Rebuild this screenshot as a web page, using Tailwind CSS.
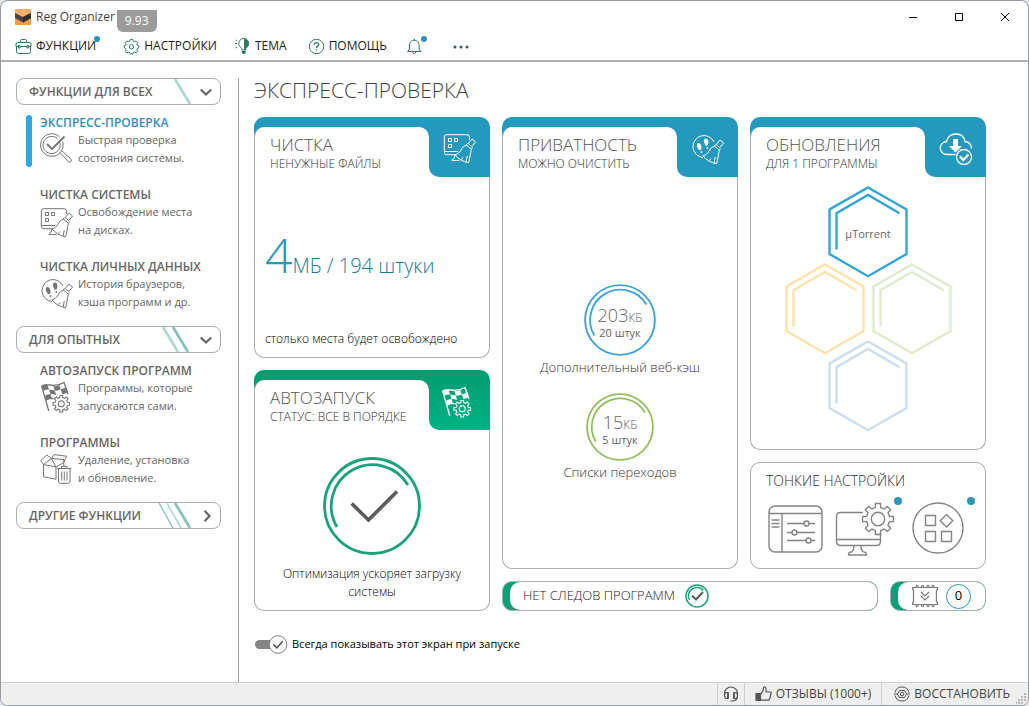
<!DOCTYPE html>
<html lang="ru">
<head>
  <title>Reg Organizer</title>
  <meta charset="UTF-8">
  <meta name="viewport" content="width=device-width, initial-scale=1">
  <script src="https://cdn.jsdelivr.net/npm/@tailwindcss/browser@4"></script>
</head>
<body class="bg-[#dfe3e7] font-['Open_Sans',sans-serif] text-xs text-[#666]">

<!-- icons -->
<svg class="hidden">
  <symbol id="gear" viewBox="-11 -11 22 22">
    <path d="M-1.7-7.3L-1.6-9.9L1.6-9.9L1.7-7.3L4-6.4L5.9-8.1L8.1-5.9L6.4-4L7.3-1.7L9.9-1.6L9.9 1.6L7.3 1.7L6.4 4L8.1 5.9L5.9 8.1L4 6.4L1.7 7.3L1.6 9.9L-1.6 9.9L-1.7 7.3L-4 6.4L-5.9 8.1L-8.1 5.9L-6.4 4L-7.3 1.7L-9.9 1.6L-9.9-1.6L-7.3-1.7L-6.4-4L-8.1-5.9L-5.9-8.1L-4-6.4Z"/>
    <circle r="3.6"/>
  </symbol>
  <symbol id="broom" viewBox="0 0 34 32">
    <path d="M29 6l3.6 3-3.8 4.6-3.6-3zM24.6 10.2l-1.3 1.7 5 4.3 1.4-1.7M23.5 12.5c-3 .4-4 1.600-5.500 4.500-1.500 2.800-3.400 4.300-6 4.800 3 4 8 7 13.500 8 1.600-4.600 1.600-9 2.900-13.500M24.300 23l-1.200 6M20 24.500l-1.500 2"/>
  </symbol>
  <symbol id="monitor-broom" viewBox="0 0 34 32">
    <path d="M26.500 7V4.200q0-2.500-2.500-2.500H3.800q-2.500 0-2.500 2.500v15q0 2.500 2.500 2.500H12M1.300 18.500h14M12 22l-1 3.500q-2 .4-2 2h7.500M5.500 5.500h3v3h-3zM11.500 5.500h3v3h-3zM5.500 11.500h3v3h-3z"/>
    <use href="#broom" width="34" height="32"/>
  </symbol>
  <symbol id="steps-broom" viewBox="0 0 34 32">
    <path d="M23 9A11 11 0 1 0 12 24.500"/>
    <path d="M13.500 6q2.300-1.600 3.600 1 .8 2.600-.5 5.500l-1.900.3q-2.600-4-1.200-6.800zM15.300 14.300l1.700-.3.300 1.600-1.500.4zM6.200 10.500q2.300-1.200 3.700 1.200 1 2.300.4 5l-2 .6q-3.500-3.500-2.100-6.800zM9.300 18.600l1.700-.5.5 1.500-1.400.6z" fill="currentColor" stroke="none"/>
    <use href="#broom" y="1" width="34" height="32"/>
  </symbol>
  <symbol id="flag-gear" viewBox="0 0 34 32">
    <path d="M1.500 4.500L8.800 30M1.500 5C8 1 13 8 24 1.500L28 13M5.500 19.500q4-3 8-1.700" stroke-width="1.300"/>
    <path d="M2 5q2.800-1.800 5.500-1.300l1.500 4.800q-2.800-.3-5.500 1.300zM13.300 5q4 .6 6-1l1.500 4.600q-3 1.400-6.100.9zM9 8.500q3 .5 5.700 1l1.500 4.400q-3-.7-5.700-.9zM20.800 8.600q3-1 5.300-2.600l1.700 5q-3 2-5.500 2.300zM5 14.800q2.500-1.600 5.500-1.800l1.500 4.700q-3-.2-5.500 1.400z" fill="currentColor" stroke="none"/>
    <use href="#gear" x="12" y="13.500" width="18.500" height="18.500" stroke-width="1.300"/>
  </symbol>
  <symbol id="magnifier" viewBox="0 0 34 32">
    <path d="M19.600 4.800A11.300 11.300 0 1 0 22.600 9.500M17.600 6.800A8.600 8.600 0 1 0 20 11M20 20.600l8.500 9.200q1.600.8 2.600-.6.600-1.300-.3-2.400L22 19"/>
    <path d="M7 12l5 5L24.500 4.500" stroke-width="1.800"/>
  </symbol>
  <symbol id="box-trash" viewBox="0 0 34 32">
    <path d="M3.500 11.500v12.300l12.500 2.400V14zM3.500 11.500L.7 7.600 6.800 2l4.700 3.500M11.500 5.500L3.500 11.500M11.500 5.500l12.300 1V10M16 14L11.500 5.500 14 1.600l12.500 1.600-3 6.500-7.500 4.300M23.800 10v3"/>
    <path d="M17 15.500h14.500M21.500 15.300v-2h5.500v2M18.500 16v12q0 2.300 2 2.300h7.500q2 0 2-2.300V16M21.700 18.500v9M24.300 18.500v9M27 18.500v9"/>
  </symbol>
  <symbol id="hexagon" viewBox="0 0 80 92">
    <path d="M40 1.500L78.500 23.500V68L40 90.200 1.500 68V23.500zM71.500 27.200L40 9 8.500 27.200V63.500"/>
  </symbol>
  <symbol id="ring" viewBox="0 0 98 98">
    <circle cx="49" cy="49" r="47.500"/>
    <path d="M14 70A41 41 0 0 1 85 28"/>
  </symbol>
</svg>

<div class="flex min-h-screen flex-col overflow-hidden rounded-lg border border-[#929ca4] bg-white">

  <!-- title bar -->
  <header>
    <div class="flex h-[31px] items-center pl-3.5">
      <svg class="mr-[5px] size-4" viewBox="0 0 16 16">
        <rect width="16" height="16" rx="1" fill="#f39a4a"/>
        <path d="M0 0h16v5L8 9 0 5z" fill="#f8b06c"/>
        <path d="M0 4l8 4 8-4v5l-8 4.500L0 9z" fill="#4b4340"/>
        <path d="M8 8l8-4v5l-8 4.500z" fill="#332e2d"/>
      </svg>
      <span class="text-[#444]">Reg Organizer</span>
      <span class="ml-0.5 flex h-[22px] items-center self-end rounded-b-md bg-[#9b9b9b] px-2 text-white">9.93</span>
      <div class="ml-auto flex text-black">
        <button class="flex h-7 w-[46px] items-center justify-center" aria-label="Свернуть"><svg class="size-3" viewBox="0 0 12 12" stroke="currentColor"><path d="M2 6.500h8"/></svg></button>
        <button class="flex h-7 w-[46px] items-center justify-center" aria-label="Развернуть"><svg class="size-3" viewBox="0 0 12 12" stroke="currentColor" fill="none"><path d="M2.500 2.500h7v7h-7z"/></svg></button>
        <button class="flex h-7 w-[46px] items-center justify-center" aria-label="Закрыть"><svg class="size-3" viewBox="0 0 12 12" stroke="currentColor"><path d="M2 2l8 8M10 2l-8 8"/></svg></button>
      </div>
    </div>

    <!-- menu -->
    <nav class="flex h-[30px] items-center border-b-2 border-[#b2b2b2] pl-3.5 text-[#1c1c1c]">
      <button class="relative mr-[27px] flex items-center gap-1">
        <svg class="size-[17px] text-[#2b7d5c]" viewBox="0 0 17 17" fill="none" stroke="currentColor">
          <path d="M1.500 8.500v5q0 2 2 2h10q2 0 2-2v-5M2.500 4.500h12q1.500 0 1.500 1.500v2.500H13.500M5 8.500h7M3.500 8.500H1V6q0-1.500 1.500-1.500M5.500 4.500V2.500q0-1 1-1h4q1 0 1 1v2M3.500 7.500h1.500v2.500h-1.500zM12 7.500h1.500v2.500H12z"/>
        </svg>
        ФУНКЦИИ
        <span class="absolute -right-1 -top-0.5 size-1.5 rounded-full bg-[#2e93b8]"></span>
      </button>
      <button class="mr-[17px] flex items-center gap-1">
        <svg class="size-[17px] text-[#2b7d5c]" viewBox="0 0 17 17" fill="none" stroke="currentColor">
          <path d="M7.300 1.500h2.400l.5 1.600 1.400.6 1.500-.8 1.500 1.500-.8 1.500.6 1.400 1.400.5v2.100l-1.400.5-.6 1.400.8 1.500-1.500 1.500-1.500-.8-1.400.6-.5 1.400H7.300l-.5-1.400-1.400-.6-1.500.8-1.500-1.500.8-1.500-.6-1.400L1.200 9.900V7.800l1.400-.5.600-1.400-.8-1.500 1.500-1.500 1.500.8 1.400-.6z"/><circle cx="8.500" cy="8.800" r="2.200"/>
        </svg>
        НАСТРОЙКИ
      </button>
      <button class="mr-[21px] flex items-center gap-1">
        <svg class="size-[17px] text-[#2b7d5c]" viewBox="0 0 17 17" fill="none" stroke="currentColor">
          <path d="M8 12q0-1.700-1.300-2.600A5 5 0 1 1 12.800 9.400Q11.500 10.300 11.500 12z"/>
          <path d="M10 .9a4.500 4.500 0 0 1 3 8Q11.500 10.300 11.500 12H10zM7.700 13h4v1.500q-.5 1.500-2 1.500t-2-1.500z" fill="currentColor" stroke="none"/>
          <path d="M1 5.500h2M1.500 2l1.500 1M1.500 10l1.500-1"/>
        </svg>
        ТЕМА
      </button>
      <button class="mr-[19px] flex items-center gap-1">
        <svg class="size-[17px] text-[#2b7d5c]" viewBox="0 0 17 17" fill="none" stroke="currentColor">
          <circle cx="8.500" cy="8.500" r="7.200"/><path d="M6.300 6.800q.1-2.200 2.200-2.200t2.200 1.900c0 1.700-2.200 1.600-2.200 3.500M8.500 11.200v1.400" stroke-width="1.300"/>
        </svg>
        ПОМОЩЬ
      </button>
      <button class="relative mr-[30px] flex items-center" aria-label="Уведомления">
        <svg class="size-[17px] text-[#2b7d5c]" viewBox="0 0 17 17" fill="none" stroke="currentColor">
          <path d="M1.500 13.500q2-1.300 2-3.500V7a4.800 4.800 0 0 1 9.600 0v3q0 2.200 2 3.500zM8.300 2.300V.8M6.800 14q0 1.700 1.500 1.700T9.800 14"/>
        </svg>
        <span class="absolute -right-1 -top-0.5 size-1.5 rounded-full bg-[#2e93b8]"></span>
      </button>
      <button aria-label="Ещё">
        <svg class="h-[17px] w-4" viewBox="0 0 16 17" fill="#2b6350"><circle cx="2" cy="9" r="1.500"/><circle cx="8" cy="9" r="1.500"/><circle cx="14" cy="9" r="1.500"/></svg>
      </button>
    </nav>
  </header>

  <div class="flex grow pt-4">

    <!-- sidebar -->
    <aside class="w-[238px] shrink-0 border-r border-[#a0a0a0] pl-[15px] pr-[17px]">
      <button class="flex h-[27px] w-full items-center rounded-lg border border-[#adadad] pl-3 pr-2 text-xs font-semibold">
        ФУНКЦИИ ДЛЯ ВСЕХ
        <svg class="ml-auto h-[25px] w-[34px]" viewBox="0 0 34 25" fill="none"><path d="M17 0l15 25" stroke="#afd6d4" stroke-width="2.800"/></svg>
        <svg class="ml-2 h-3 w-3" viewBox="0 0 12 12" fill="none" stroke="#666" stroke-width="2.200"><path d="M.8 3.500L6 8.500l5.200-5"/></svg>
      </button>
      <ul class="mb-[15px] mt-2.5 space-y-5">
        <li>
          <a href="#" class="flex gap-2 pl-2.5">
            <span class="h-[52px] w-1.5 shrink-0 rounded-full bg-[#29abe2]"></span>
            <div>
              <h3 class="whitespace-nowrap text-xs font-semibold leading-4 text-[#2f8fc4]">ЭКСПРЕСС-ПРОВЕРКА</h3>
              <div class="flex gap-1">
                <svg class="mt-px h-8 w-[34px] shrink-0 text-[#757575]" fill="none" stroke="currentColor"><use href="#magnifier"/></svg>
                <p class="whitespace-nowrap text-[11px] leading-[18px]">Быстрая проверка<br>состояния системы.</p>
              </div>
            </div>
          </a>
        </li>
        <li>
          <a href="#" class="block pl-6">
            <h3 class="whitespace-nowrap text-xs font-semibold leading-4">ЧИСТКА СИСТЕМЫ</h3>
            <div class="flex gap-1">
              <svg class="mt-1 h-8 w-[34px] shrink-0 text-[#757575]" fill="none" stroke="currentColor"><use href="#monitor-broom"/></svg>
              <p class="whitespace-nowrap text-[11px] leading-[18px]">Освобождение места<br>на дисках.</p>
            </div>
          </a>
        </li>
        <li>
          <a href="#" class="block pl-6">
            <h3 class="whitespace-nowrap text-xs font-semibold leading-4">ЧИСТКА ЛИЧНЫХ ДАННЫХ</h3>
            <div class="flex gap-1">
              <svg class="mt-0.5 h-8 w-[34px] shrink-0 text-[#757575]" fill="none" stroke="currentColor"><use href="#steps-broom"/></svg>
              <p class="whitespace-nowrap text-[11px] leading-[18px]">История браузеров,<br>кэша программ и др.</p>
            </div>
          </a>
        </li>
      </ul>

      <button class="flex h-[27px] w-full items-center rounded-lg border border-[#adadad] pl-3 pr-2 text-xs font-semibold">
        ДЛЯ ОПЫТНЫХ
        <svg class="ml-auto h-[25px] w-[34px]" viewBox="0 0 34 25" fill="none"><path d="M5 0l15 25" stroke="#afd6d4" stroke-width="2.600"/><path d="M15 0l15 25" stroke="#86c3bb" stroke-width="2.800"/></svg>
        <svg class="ml-2 h-3 w-3" viewBox="0 0 12 12" fill="none" stroke="#666" stroke-width="2.200"><path d="M.8 3.500L6 8.500l5.200-5"/></svg>
      </button>
      <ul class="mb-[15px] mt-2.5 space-y-5">
        <li>
          <a href="#" class="block pl-6">
            <h3 class="whitespace-nowrap text-xs font-semibold leading-4">АВТОЗАПУСК ПРОГРАММ</h3>
            <div class="flex gap-1">
              <svg class="mt-0.5 h-8 w-[34px] shrink-0 text-[#757575]" fill="none" stroke="currentColor"><use href="#flag-gear"/></svg>
              <p class="whitespace-nowrap text-[11px] leading-[18px]">Программы, которые<br>запускаются сами.</p>
            </div>
          </a>
        </li>
        <li>
          <a href="#" class="block pl-6">
            <h3 class="whitespace-nowrap text-xs font-semibold leading-4">ПРОГРАММЫ</h3>
            <div class="flex gap-1">
              <svg class="mt-0.5 h-8 w-[34px] shrink-0 text-[#757575]" fill="none" stroke="currentColor"><use href="#box-trash"/></svg>
              <p class="whitespace-nowrap text-[11px] leading-[18px]">Удаление, установка<br>и обновление.</p>
            </div>
          </a>
        </li>
      </ul>

      <button class="flex h-[27px] w-full items-center rounded-lg border border-[#adadad] pl-3 pr-2 text-xs font-semibold">
        ДРУГИЕ ФУНКЦИИ
        <svg class="ml-auto h-[25px] w-[34px]" viewBox="0 0 34 25" fill="none"><path d="M1 0l14 25" stroke="#86c3bb" stroke-width="1.300"/><path d="M9 0l14 25" stroke="#afd6d4" stroke-width="1.600"/><path d="M17 0l15 25" stroke="#86c3bb" stroke-width="2.800"/></svg>
        <svg class="ml-2 h-3 w-3" viewBox="0 0 12 12" fill="none" stroke="#666" stroke-width="2.200"><path d="M4.500.8L9.500 6l-5 5.200"/></svg>
      </button>
    </aside>

    <!-- content -->
    <main class="grow pl-[15px] pr-[42px]">
      <h1 class="mb-[15px] text-[21px] font-light leading-6 text-[#444]">ЭКСПРЕСС-ПРОВЕРКА</h1>

      <div class="grid grid-cols-3 gap-3">
        <div class="flex flex-col gap-3">

          <!-- cleaning -->
          <section class="flex h-[241px] flex-col">
            <div class="flex h-[60px] shrink-0">
              <div class="flex grow rounded-tl-[10px] bg-[#2499bd] pt-2.5">
                <div class="grow rounded-t-[10px] border-l border-[#adadad] bg-white pl-[15px] pt-2">
                  <h2 class="text-[17px] font-light leading-5 text-[#555]">ЧИСТКА</h2>
                  <p class="whitespace-nowrap text-xs font-light leading-[18px] text-[#333]">НЕНУЖНЫЕ ФАЙЛЫ</p>
                </div>
              </div>
              <div class="w-[61px] bg-white">
                <div class="flex h-full items-center justify-center rounded-bl-[10px] rounded-tr-[10px] bg-[#2499bd] pt-1">
                  <svg class="h-8 w-[34px] text-white" fill="none" stroke="currentColor"><use href="#monitor-broom"/></svg>
                </div>
              </div>
            </div>
            <div class="flex grow flex-col rounded-b-[10px] border border-t-0 border-[#adadad] px-2.5 pb-2">
              <p class="mt-[54px] whitespace-nowrap text-xl font-light leading-[60px] text-[#1d7a99]"><span class="text-5xl text-[#2499bd]">4</span>МБ / 194 штуки</p>
              <p class="mt-auto whitespace-nowrap text-xs font-light leading-5 text-black">столько места будет освобождено</p>
            </div>
          </section>

          <!-- startup -->
          <section class="flex h-[241px] flex-col">
            <div class="flex h-[60px] shrink-0">
              <div class="flex grow rounded-tl-[10px] bg-[#009d6f] pt-2.5">
                <div class="grow rounded-t-[10px] border-l border-[#adadad] bg-white pl-[15px] pt-2">
                  <h2 class="text-[17px] font-light leading-5 text-[#555]">АВТОЗАПУСК</h2>
                  <p class="whitespace-nowrap text-xs font-light leading-[18px] text-[#333]">СТАТУС: ВСЕ В ПОРЯДКЕ</p>
                </div>
              </div>
              <div class="w-[61px] bg-white">
                <div class="flex h-full items-center justify-center rounded-bl-[10px] rounded-tr-[10px] bg-linear-to-b from-[#009d6f] to-[#00b286] pr-1 pt-1">
                  <svg class="h-8 w-[34px] text-white" fill="none" stroke="currentColor"><use href="#flag-gear"/></svg>
                </div>
              </div>
            </div>
            <div class="flex grow flex-col items-center rounded-b-[10px] border border-t-0 border-[#adadad] px-5 pb-[9px] pt-[27px] text-center">
              <svg class="size-[98px] text-[#18a37c]" viewBox="0 0 98 98" fill="none" stroke="currentColor" stroke-width="2.800">
                <use href="#ring"/>
                <path d="M28.700 46.500L45.500 63 74 34.500" stroke="#5c5c5c" stroke-width="3.600"/>
              </svg>
              <p class="mt-auto text-xs font-light leading-[18px] text-black">Оптимизация ускоряет загрузку системы</p>
            </div>
          </section>
        </div>

        <div class="col-span-2 flex flex-col gap-3">
          <div class="grid grow grid-cols-2 gap-3">

            <!-- privacy -->
            <section class="flex flex-col">
              <div class="flex h-[60px] shrink-0">
                <div class="flex grow rounded-tl-[10px] bg-[#2499bd] pt-2.5">
                  <div class="grow rounded-t-[10px] border-l border-[#adadad] bg-white pl-[15px] pt-2">
                    <h2 class="text-[17px] font-light leading-5 text-[#555]">ПРИВАТНОСТЬ</h2>
                    <p class="whitespace-nowrap text-xs font-light leading-[18px] text-[#333]">МОЖНО ОЧИСТИТЬ</p>
                  </div>
                </div>
                <div class="w-[61px] bg-white">
                  <div class="flex h-full items-center justify-center rounded-bl-[10px] rounded-tr-[10px] bg-[#2499bd] pt-1">
                    <svg class="h-8 w-[34px] text-white" fill="none" stroke="currentColor"><use href="#steps-broom"/></svg>
                  </div>
                </div>
              </div>
              <div class="flex grow flex-col items-center justify-center rounded-b-[10px] border border-t-0 border-[#adadad] pt-[21px]">
                <div class="grid place-items-center">
                  <svg class="col-start-1 row-start-1 size-[72px] text-[#3ea6d6]" fill="none" stroke="currentColor" stroke-width="2.600"><use href="#ring"/></svg>
                  <div class="col-start-1 row-start-1 pt-1.5 text-center">
                    <p class="text-lg font-light leading-4">203<span class="text-xs">КБ</span></p>
                    <p class="text-[11px] leading-[14px]">20 штук</p>
                  </div>
                </div>
                <p class="mt-px text-[13px] font-light leading-5 text-[#333]">Дополнительный веб-кэш</p>
                <div class="mt-4 grid place-items-center">
                  <svg class="col-start-1 row-start-1 size-[68px] text-[#93c05c]" fill="none" stroke="currentColor" stroke-width="2.600"><use href="#ring"/></svg>
                  <div class="col-start-1 row-start-1 pt-1.5 text-center">
                    <p class="text-lg font-light leading-4">15<span class="text-xs">КБ</span></p>
                    <p class="text-[11px] leading-[14px]">5 штук</p>
                  </div>
                </div>
                <p class="mt-px text-[13px] font-light leading-5 text-[#333]">Списки переходов</p>
              </div>
            </section>

            <div class="flex flex-col gap-3">
              <!-- updates -->
              <section class="flex grow flex-col">
                <div class="flex h-[60px] shrink-0">
                  <div class="flex grow rounded-tl-[10px] bg-[#2499bd] pt-2.5">
                    <div class="grow rounded-t-[10px] border-l border-[#adadad] bg-white pl-[15px] pt-2">
                      <h2 class="text-[17px] font-light leading-5 text-[#555]">ОБНОВЛЕНИЯ</h2>
                      <p class="whitespace-nowrap text-xs font-light leading-[18px] text-[#333]">ДЛЯ 1 ПРОГРАММЫ</p>
                    </div>
                  </div>
                  <div class="w-[61px] bg-white">
                    <div class="flex h-full items-center justify-center rounded-bl-[10px] rounded-tr-[10px] bg-[#2499bd] pt-1">
                      <svg class="h-8 w-[34px] text-white" viewBox="0 0 34 32" fill="none" stroke="currentColor" stroke-width="1.300">
                        <path d="M16.500 21.500H8a6.500 6.500 0 0 1-.5-13Q9.500 1 17 1t9 7.500q6 .5 6.500 7"/>
                        <path d="M14 6h5v7h4l-6.500 6.500L10 13h4z" fill="currentColor" stroke="none"/>
                        <circle cx="25" cy="24" r="7.500"/><path d="M21 23.500l3.300 3.500 5.200-5.500" stroke-width="2.400"/>
                      </svg>
                    </div>
                  </div>
                </div>
                <div class="flex grow flex-col items-center rounded-b-[10px] border border-t-0 border-[#adadad] pb-4 pt-[9px]">
                  <div class="grid place-items-center">
                    <svg class="col-start-1 row-start-1 h-[92px] w-20 text-[#32a6d8]" fill="none" stroke="currentColor" stroke-width="2.400"><use href="#hexagon"/></svg>
                    <span class="col-start-1 row-start-1 pt-1 text-[11px]">µTorrent</span>
                  </div>
                  <div class="-mt-[15px] flex gap-[7px]">
                    <svg class="h-[92px] w-20 text-[#fce3ad]" fill="none" stroke="currentColor" stroke-width="2.400"><use href="#hexagon"/></svg>
                    <svg class="h-[92px] w-20 text-[#dfebcc]" fill="none" stroke="currentColor" stroke-width="2.400"><use href="#hexagon"/></svg>
                  </div>
                  <svg class="-mt-[15px] h-[92px] w-20 text-[#cbdeec]" fill="none" stroke="currentColor" stroke-width="2.400"><use href="#hexagon"/></svg>
                </div>
              </section>

              <!-- fine tuning -->
              <section class="h-[107px] rounded-[10px] border border-[#adadad] pl-[15px] pt-2">
                <h2 class="text-sm font-light leading-5 text-[#333]">ТОНКИЕ НАСТРОЙКИ</h2>
                <div class="mt-2.5 flex gap-[11px]">
                  <button class="ml-0.5" aria-label="Параметры">
                    <svg class="h-14 w-[56px]" viewBox="0 0 56 56" fill="none" stroke="#858585" stroke-width="1.400">
                      <rect x="1" y="5" width="53" height="46" rx="6"/>
                      <path d="M1 12.500h53M14 12.500v38.500M3.500 19h8M3.500 22.500h8M3.500 26h8M19 22.500h17M41 22.500h6M19 31.500h5M29 31.500h18M19 39.500h19M43 39.500h4"/>
                      <circle cx="38.500" cy="22.500" r="2.500"/><circle cx="26.500" cy="31.500" r="2.500"/><circle cx="40.500" cy="39.500" r="2.500"/>
                    </svg>
                  </button>
                  <button class="relative" aria-label="Компьютер">
                    <svg class="h-14 w-[60px]" viewBox="0 0 60 56" fill="none" stroke="#858585" stroke-width="1.400">
                      <path d="M28 11.500H5.500q-4 0-4 4V40q0 4.500 4 4.500h36q4 0 4-4.500V32M1.500 38.500h44M19 45q0 6-4.500 6.500-1 .2-1 2.500h18q0-2.300-1-2.500-4.500-.5-4.500-6.500"/>
                      <path transform="translate(43 18) scale(1.560)" stroke-width=".9" d="M-1.700-7.300L-1.600-9.900L1.600-9.900L1.700-7.300L4-6.400L5.900-8.100L8.100-5.900L6.400-4L7.300-1.700L9.900-1.600L9.900 1.600L7.300 1.700L6.400 4L8.100 5.900L5.900 8.100L4 6.400L1.700 7.300L1.600 9.900L-1.600 9.900L-1.700 7.300L-4 6.400L-5.900 8.100L-8.100 5.900L-6.400 4L-7.300 1.700L-9.900 1.600L-9.900-1.600L-7.300-1.700L-6.400-4L-8.100-5.900L-5.900-8.100L-4-6.400Z"/>
                      <circle cx="43" cy="18" r="6.700"/>
                    </svg>
                    <span class="absolute -right-[7px] -top-1 size-2 rounded-full bg-[#2e93b8]"></span>
                  </button>
                  <button class="relative ml-1.5" aria-label="Приложения">
                    <svg class="h-14 w-[52px]" viewBox="0 0 52 56" fill="none" stroke="#858585" stroke-width="1.400">
                      <circle cx="26" cy="27" r="25"/>
                      <path d="M13.500 14.500h10v10h-10zM34.500 13.500l6.300 6.300-6.300 6.300-6.300-6.300zM13.500 30.500h10v10h-10zM29.500 30.500h10v10h-10z"/>
                    </svg>
                    <span class="absolute -right-[11px] -top-1 size-2 rounded-full bg-[#2e93b8]"></span>
                  </button>
                </div>
              </section>
            </div>
          </div>

          <!-- traces / memory -->
          <div class="flex h-[30px] gap-3">
            <button class="flex grow overflow-hidden rounded-[10px] border border-[#adadad] bg-[#09a077] pl-[7px]">
              <span class="flex h-full grow items-center rounded-l-[10px] bg-white pl-[13px] text-[13px] font-light text-[#222]">
                НЕТ СЛЕДОВ ПРОГРАММ
                <svg class="ml-2.5 size-6 text-[#18a37c]" viewBox="0 0 24 24" fill="none" stroke="currentColor" stroke-width="1.500">
                  <circle cx="12" cy="12" r="11"/><path d="M4.500 16A8.500 8.500 0 0 1 18.500 6.500"/><path d="M7 11.500l4 4 7-7.500" stroke="#5c5c5c" stroke-width="2"/>
                </svg>
              </span>
            </button>
            <button class="flex w-24 overflow-hidden rounded-[10px] border border-[#adadad] bg-[#09a077] pl-[7px]">
              <span class="flex h-full grow items-center gap-2 rounded-l-[10px] bg-white pl-3.5 text-[13px] text-black">
                <svg class="h-6 w-[26px]" viewBox="0 0 26 24" fill="none" stroke="#7a7a7a" stroke-width="1.200">
                  <path d="M.6 3.500h24.800v2q-1 .5-1 1.500v10q0 1 1 1.500v2H.6v-2Q1.500 18 1.500 17V7Q1.500 6 .6 5.500zM9 8l4 4 4-4M9 12l4 4 4-4"/>
                  <path d="M4 3.500V2q1-1.500 2 0v1.500M9.500 3.500V2q1-1.500 2 0v1.500M15 3.500V2q1-1.500 2 0v1.500M20 3.500V2q1-1.500 2 0v1.500M4 20.500V22q1 1.500 2 0v-1.500M9.500 20.500V22q1 1.500 2 0v-1.500M15 20.500V22q1 1.500 2 0v-1.500M20 20.500V22q1 1.500 2 0v-1.500"/>
                </svg>
                <span class="flex size-[25px] items-center justify-center rounded-full border border-[#2a93c4]">0</span>
              </span>
            </button>
          </div>
        </div>
      </div>

      <label class="mt-6 flex w-fit items-center gap-1 text-[11px] text-black">
        <input type="checkbox" checked class="sr-only">
        <svg class="h-[19px] w-[34px]" viewBox="0 0 34 19" fill="none">
          <rect x="1" y="5" width="26" height="9" rx="4.500" fill="#858585"/>
          <circle cx="24" cy="9.500" r="8.800" fill="#fff" stroke="#808080"/>
          <path d="M19.500 9.500l3.300 3.300 6-6.500" stroke="#555" stroke-width="1.600"/>
        </svg>
        Всегда показывать этот экран при запуске
      </label>
    </main>
  </div>

  <!-- status bar -->
  <footer class="flex h-[23px] items-center justify-end border-t border-[#d2d2d2] bg-[#efefef] text-xs text-[#444]">
    <button class="flex h-full w-[27px] items-center justify-center border-l border-[#cfcfcf]" aria-label="Поддержка">
      <svg class="size-4" viewBox="0 0 16 16" fill="none" stroke="#555" stroke-width="1.200">
        <path d="M1.500 10V7.500a6.500 6.500 0 0 1 13 0V10q0 4-4 5M5 6.500v6H3.800q-2.300 0-2.300-3t2.300-3zM11 6.500v6h1.200q2.300 0 2.300-3t-2.300-3zM7.500 15h3"/>
        <path d="M5 6.500v6M11 6.500v6" stroke-width="1.800"/>
      </svg>
    </button>
    <a href="#" class="flex h-full items-center gap-1 whitespace-nowrap border-l border-[#cfcfcf] px-2.5">
      <svg class="h-4 w-[17px]" viewBox="0 0 17 16" fill="none" stroke="#555" stroke-width="1.200">
        <path d="M1 7.500h4.500v7H1z" fill="#555"/><path d="M5.500 8q3-2 3-6 .3-1.200 1.500-1 1.500.5 1 5h4.500q.8 0 .6 1l-1.500 6q-.4 1.200-1.500 1.200H5.500"/>
      </svg>
      ОТЗЫВЫ (1000+)
    </a>
    <a href="#" class="flex h-full items-center gap-1 whitespace-nowrap border-l border-[#cfcfcf] pl-3 pr-1.5">
      <svg class="size-4" viewBox="0 0 16 16" fill="none" stroke="#555">
        <path d="M1 6.500a7.200 7.200 0 0 1 14 0M1 9.500a7.200 7.200 0 0 0 14 0M0 8h3.500M12.500 8H16M3.500 8l2-3.500h5l2 3.500-2 3.500h-5z"/><circle cx="8" cy="8" r="1.800"/>
      </svg>
      ВОССТАНОВИТЬ
    </a>
    <svg class="size-3 self-end" viewBox="0 0 12 12" fill="#b5b5b5"><path d="M8 0h2v2H8zM5 3h2v2H5zM8 3h2v2H8zM2 6h2v2H2zM5 6h2v2H5zM8 6h2v2H8zM0 9h1v2H0zM2 9h2v2H2zM5 9h2v2H5z"/></svg>
  </footer>
</div>
</body>
</html>
